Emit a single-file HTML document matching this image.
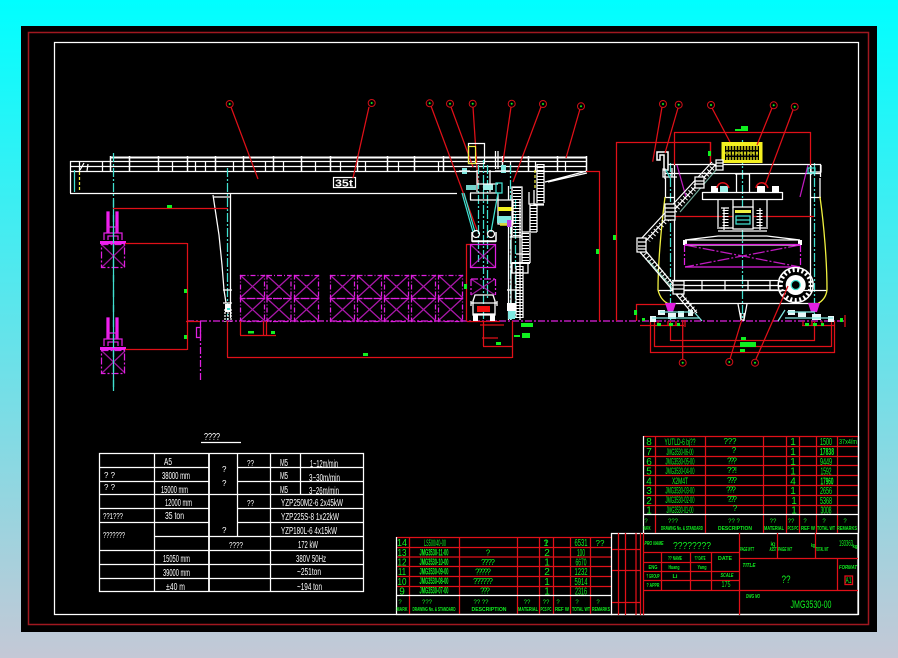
<!DOCTYPE html>
<html><head><meta charset="utf-8"><style>
html,body{margin:0;padding:0;width:898px;height:658px;overflow:hidden;background:linear-gradient(180deg,#00ffff 0%,#c4c8d6 100%)}
svg{position:absolute;left:0;top:0;stroke-width:1.25}
.w{stroke:#fff;fill:none}.r{stroke:#e01018;fill:none}.c{stroke:#40e0d0;fill:none;stroke-dasharray:9 2 2 2}.m{stroke:#e020e0;fill:none}.md{stroke:#e020e0;fill:none;stroke-dasharray:7 2 2 2}.y{stroke:#f0f040;fill:none}
text{font-family:"Liberation Sans",sans-serif;stroke:none}
.tw{fill:#fff;font-size:10px}.tg{fill:#10f020;font-size:10px;text-anchor:middle}.ts{fill:#10f020;font-size:5px;font-weight:bold;text-anchor:middle}.tb{fill:#10f020;font-size:6px;text-anchor:middle}
</style></head><body>
<svg width="898" height="658" viewBox="0 0 898 658">
<defs>
<g id="cont"><rect x="0.5" y="0.5" width="24" height="23" class="m" stroke-dasharray="5 2 1 2"/><path d="M0 0L25 23M25 0L0 23" class="m" opacity=".75"/></g>
<g id="stack"><use href="#cont" y="275"/><use href="#cont" y="298"/></g>
<g id="spr"><path d="M107 212h2v20h-2zM116 212h2v20h-2z" fill="#f020f0" stroke="#f020f0"/><path d="M108 233v-6h9v6M104 240v-7h18v7M108 240v-4h10v4" class="m"/><rect x="100" y="241" width="26" height="3" fill="#f020f0"/><rect x="101.500" y="244.500" width="23" height="23" class="md"/><path d="M102 245L125 267M125 245L102 267" class="m" opacity=".7"/></g>
<g id="ldr"><circle r="3.500" stroke="#d01018" fill="none" stroke-width="1"/><circle r="1" fill="#10f020"/></g>
</defs>
<rect x="21" y="26" width="856" height="606" fill="#000"/>
<rect x="28.500" y="32.500" width="840" height="592" fill="none" stroke="#a01820" stroke-width="1.500"/>
<rect x="54.500" y="42.500" width="804" height="572" fill="none" stroke="#fff"/>

<!-- girder -->
<g>
<path d="M110 157.500H587" class="w" stroke-width="2"/>
<path d="M70 161.500H586M70 166.500H586M70 171.500H586" class="w"/>
<path d="M70.500 161V193M70 193.500H457M79.500 161v10" class="w"/>
<path d="M110.500 156v16M129.500 156v16M158.500 156v16M187.500 156v16M215.500 156v16M243.500 156v16M273.500 156v16M301.500 156v16M330.500 156v16M357.500 156v16M387.500 156v16M414.500 156v16M443.500 156v16M502.500 156v16M528.500 156v16M557.500 156v16M586.500 156v16" class="w" stroke-width="1.500"/>
<path d="M102.500 162v9M172.500 162v9M195.500 162v9M205.500 162v9M233.500 162v9M265.500 162v9M283.500 162v9M315.500 162v9M340.500 162v9M365.500 162v9M398.500 162v9M438.500 162v9M510.500 162v9M535.500 162v9M565.500 162v9" class="w"/>
<path d="M74.500 170v22" stroke="#40e0d0"/><path d="M79.500 172v20" stroke="#f0f040" stroke-dasharray="3 2"/>
<rect x="333.500" y="177.500" width="22" height="10" fill="#000" stroke="#fff" stroke-width="1.200"/>
</g>
<text x="335" y="186.500" class="tw" font-weight="bold" textLength="18" lengthAdjust="spacingAndGlyphs">35t</text>
<path d="M84 163l-4 7M88 164l-1 7" class="w"/>
<path d="M587 171L545 182M587 173L548 182" class="w"/>

<!-- centre lines -->
<path d="M113.500 153V392M227.500 168V320M483.500 160V320M487.500 165V300M478.500 165V262M742.500 140V320M670.500 163V320M814.500 163V320M510.500 165V320M515.500 200V320" class="c"/>
<!-- left spreaders -->
<use href="#spr"/><use href="#spr" y="106"/>
<path d="M113.500 200V390" class="c"/>

<!-- left leg -->
<path d="M213 195L216 215L219 235L222 265L224 290L226 303" class="w"/><path d="M230.500 194V318" class="w"/><path d="M214 197H230M223 290H232M223 303H232" class="w"/>
<rect x="225" y="304" width="6" height="8" fill="#fff"/><path d="M225 309v13M228 312v10M231 309v13" class="w" stroke-dasharray="2 1"/><rect x="227" y="308" width="3" height="2" fill="#40e0d0"/>

<!-- containers -->
<use href="#stack" x="240"/><use href="#stack" x="266.500"/><use href="#stack" x="294"/>
<use href="#stack" x="330"/><use href="#stack" x="357"/><use href="#stack" x="384"/><use href="#stack" x="411"/><use href="#stack" x="438"/>
<path d="M187 321H845" class="md"/>
<path d="M200.500 321V382" class="md"/><rect x="196.500" y="327.500" width="4" height="10" class="m"/>

<!-- dims left -->
<g>
<path d="M113 208.500H228M125 243.500H187M125 349.500H187M187.500 243V350M186 321.500H200M227.500 321V357M227 357.500H512M512.500 321V358M483.500 321V346M483 346.500H512M240.500 321V335M240 335.500H276M263.500 321v14M266.500 321v14M466.500 244V321M466 244.500H472M599.500 171V321M586 171.500H600M616.500 142V321M616 142.500H711M710.500 142v22M467 321.500H500" class="r"/>
<path d="M480 325h24M482 338h16" class="r"/>
</g>
<g fill="#10f020"><rect x="167" y="205" width="5" height="3"/><rect x="184" y="289" width="3" height="4"/><rect x="184" y="335" width="3" height="4"/><rect x="248" y="331" width="6" height="2.500"/><rect x="271" y="331" width="4" height="3"/><rect x="464" y="284" width="3" height="5"/><rect x="596" y="249" width="3" height="5"/><rect x="613" y="235" width="3" height="5"/><rect x="496" y="342" width="5" height="3"/><rect x="363" y="353" width="5" height="3"/><rect x="521" y="323" width="12" height="4"/><rect x="522" y="333" width="8" height="5"/><rect x="514" y="335" width="6" height="2"/></g>

<!-- leaders left -->
<path d="M231 107L258 179M369 107L353 178M431 106L477 230M451 107L473 167M473 107L478 183M511 107L503 162M541 107L513 182M580 109L566 158" class="r"/>
<use href="#ldr" x="229.700" y="104"/><use href="#ldr" x="371.700" y="103"/><use href="#ldr" x="429.700" y="103.300"/><use href="#ldr" x="450" y="103.700"/><use href="#ldr" x="472.700" y="103.700"/><use href="#ldr" x="511.700" y="103.700"/><use href="#ldr" x="543" y="104"/><use href="#ldr" x="581" y="106.300"/>

<!-- trolley -->
<rect x="468.500" y="143.500" width="16" height="20" class="w"/><rect x="468.500" y="146.500" width="7" height="17" class="y" stroke-width="1.200"/>
<path d="M495.500 151v18M498 151v18" class="w"/>
<rect x="462" y="168" width="5" height="6" fill="#7fe8e0"/><rect x="501" y="165" width="5" height="8" fill="#7fe8e0"/><path d="M459 171H470M495 171H510" class="w"/>
<path d="M477 170v22M490 170v22M470 193h28M470 200h28M470.500 193v7M498 193v7" class="w"/>
<rect x="466" y="185" width="10" height="5" fill="#7fe8e0" opacity=".9"/><rect x="483" y="184" width="10" height="6" fill="#9ff0e8"/><path d="M477 184H498" class="w"/>
<rect x="496" y="183" width="6" height="10" stroke="#40e0d0" fill="none"/>
<path d="M462 193L473 232M498 193L491 232" stroke="#40e0d0" fill="none"/><path d="M464 193L475 232" stroke="#40e0d0" fill="none"/>
<circle cx="476" cy="234" r="3.500" class="w"/><circle cx="491" cy="234" r="3.500" class="w"/>
<path d="M472 232v9h24v-9M472 241.500h24" class="w" stroke-width="1.500"/>
<rect x="470.500" y="244.500" width="25" height="23" class="m"/><path d="M471 245L495 267M495 245L471 267" class="m" opacity=".7"/>
<path d="M471 279h25M471 279v16M495.500 279v16" class="md"/><path d="M471 279L495 295M495 279L471 295" class="m" opacity=".7"/>
<!-- truck -->
<path d="M473 315v-14l2-6h18l2 6v14zM471 303h26M471 301v5M497 301v5" class="w" stroke-width="1.300"/><rect x="477" y="306" width="13" height="6" fill="#f00c0c"/><rect x="473" y="315" width="5" height="6" fill="#fff"/><rect x="490" y="315" width="5" height="6" fill="#fff"/><path d="M473 314h22" class="w"/>

<!-- right leg and stairs -->
<path d="M508.500 186V320M511 200V320M520 200V320" class="w"/>
<rect x="498" y="200" width="15" height="24" fill="#000" stroke="#fff"/>
<rect x="498" y="207" width="15" height="4" fill="#f0f020"/><rect x="500" y="223" width="13" height="3" fill="#f0f020" opacity=".7"/>
<path d="M497 216h14v7h-14z" fill="#7fe8e0"/><rect x="507" y="220" width="5" height="7" fill="#c040e0"/>
<rect x="512" y="187" width="10" height="50" class="w"/><path d="M517 187V236" stroke="#fff" stroke-width="8" stroke-dasharray="1 2" fill="none"/>
<path d="M537 164V203M544 164V203" class="w"/><path d="M540.500 164V203" stroke="#fff" stroke-width="7" stroke-dasharray="1 2" fill="none"/>
<path d="M534 190V205H544M529 192V204h15" class="w"/>
<path d="M530 204V232M537 204V232" class="w"/><path d="M533.500 205V232" stroke="#fff" stroke-width="7" stroke-dasharray="1 2" fill="none"/>
<path d="M522 232h15M522 233V263M530 233V263" class="w"/><path d="M525.500 233V263" stroke="#fff" stroke-width="7" stroke-dasharray="1 2" fill="none"/>
<path d="M512 263h16v10h-16zM516 254h14" class="w"/><rect x="512" y="262" width="18" height="2" fill="#fff"/>
<path d="M516 266V318M523 266V318" class="w"/><path d="M519.500 266V318" stroke="#fff" stroke-width="7" stroke-dasharray="1 2" fill="none"/>
<path d="M535 170V190" stroke="#f0f040" stroke-dasharray="3 2"/>
<rect x="507" y="303" width="9" height="8" fill="#fff"/><rect x="508" y="311" width="7" height="8" fill="#7fe8e0"/><path d="M507 290h12" class="w"/>

<!-- right view -->
<rect x="721.500" y="142" width="41" height="21" fill="#f4f020"/>
<rect x="725" y="146" width="34" height="14" fill="#000"/>
<path d="M727 146v14M730 146v14M733 146v14M736 146v14M739 146v14M742 146v14M745 146v14M748 146v14M751 146v14M754 146v14M757 146v14" stroke="#f4f020" stroke-dasharray="4 1.500" stroke-width="1.300"/>
<path d="M724 153H760" stroke="#f4f020" stroke-dasharray="2 2"/>
<g>
<path d="M665 164.500H821M665 173.500H821M665 164v15M820.500 164v13M665 197.500H675M810 197.500H821M665.500 178v19M820 178v19" class="w"/>
<path d="M674.500 165V290M810.500 165V290" class="w"/>
<path d="M658 290.500H827M668 303.500H817M672 280.500H778M672 285.500H778M672 290H778" class="w"/>
<path d="M680 281v9M702 281v9M725 281v9M748 281v9M770 281v9" class="w"/>
<path d="M702.500 192.500H782.500M702.500 199.500H782.500M702.500 192v8M782.500 192v8" class="w"/>
<path d="M736.500 174v19M749.500 174v19M735 174h15" class="w"/>
<path d="M671 216.500H814M674 132.500H811M674.500 132v33M810.500 132v33M710.500 142v22" class="r"/>
<path d="M670.500 321v20M814.500 321v20M670 340.500H815M654.500 321v26M831.500 321v26M654 346.500H831M650.500 321v32M834.500 321v32M650 352.500H835M636.500 304v17M636 304.500H668M640 325.500H684M802 325.500H835M658 321v5M668 321v5M676 321v5M803 321v5M812 321v5M822 321v5M685 320v7M845 315v12" class="r"/>
</g>
<path d="M677 165L686 197M808 165L800 197" class="m" opacity=".85"/>
<path d="M665 197C661 230 658 262 658 290C660 298 664 302 669 304M820 197C824 225 827 262 827 290C826 298 821 302 817 304" class="y" stroke-width="1.300"/>
<!-- trolley wheels -->
<g fill="#fff"><rect x="711" y="186" width="7" height="6"/><rect x="772" y="186" width="7" height="6"/><rect x="720" y="186" width="8" height="6" fill="#9ff0e8"/><rect x="757" y="186" width="8" height="6" fill="#fff"/></g>
<path d="M717 188c1-7 10-7 12 0M756 188c1-7 10-7 12 0" class="r" stroke-width="1.500"/>
<!-- hoist -->
<path d="M718 199v30M767 199v30M724 208v22M733 200v8h20v-8M760 208v22M719 228H766M718 231H767" class="w"/>
<path d="M721 208h8M721 228h8" class="w"/><path d="M725.500 210v18" stroke="#fff" stroke-width="6" stroke-dasharray="1 2" fill="none"/><path d="M759.500 210v18" stroke="#fff" stroke-width="6" stroke-dasharray="1 2" fill="none"/>
<rect x="733" y="207" width="20" height="22" fill="#000" stroke="#fff"/>
<rect x="735" y="210" width="16" height="3" fill="#f0f040"/>
<path d="M736 216h14v8h-14zM736 220h14" stroke="#40e0d0" fill="none"/>
<!-- spreader -->
<path d="M685 240L718 236H767L800 240H685ZM685 245H800" class="w" stroke-width="1.300"/>
<rect x="683" y="240" width="4" height="5" fill="#fff"/><rect x="798" y="240" width="4" height="5" fill="#fff"/>
<path d="M684.500 245V267M800.500 245V267" class="md"/><path d="M685 244.500H800M685 267H800" class="m"/>
<path d="M685 245L800 267M800 245L685 267" class="m" stroke-dasharray="12 2 2 2" opacity=".85"/>
<!-- reel -->
<circle cx="795.700" cy="285" r="17.500" class="w" stroke-width="1.500"/><circle cx="795.700" cy="285" r="15" stroke="#fff" fill="none" stroke-width="4" stroke-dasharray="2 2.500"/><circle cx="795.700" cy="285" r="10" fill="#fff"/><circle cx="795.700" cy="285" r="4.500" fill="#000" stroke="#40e0d0"/>
<!-- stairs -->
<path d="M718 162L644 243M712 162L640 240M645 250L697 313M640 252L692 313" class="w"/>
<path d="M715 165L648 240M642 251L695 312" stroke="#fff" stroke-width="6" stroke-dasharray="1 3" fill="none"/>
<path d="M716 170L680 212M648 260L676 292" stroke="#9ff0d8" fill="none" opacity=".7"/>
<rect x="637" y="238" width="9" height="14" fill="#000" stroke="#fff"/><path d="M638 242h8M638 246h8M638 249h8" class="w"/>
<rect x="665" y="204" width="10" height="16" fill="#000" stroke="#fff"/><path d="M665 208h10M665 212h10M665 216h10" class="w"/>
<rect x="695" y="177" width="9" height="11" fill="#000" stroke="#fff"/><path d="M695 181h9M695 184h9" class="w"/>
<rect x="716" y="160" width="7" height="10" fill="#000" stroke="#fff"/><path d="M716 163h7M716 166h7" class="w"/>
<rect x="673" y="281" width="11" height="13" fill="#000" stroke="#fff"/><path d="M673 285h11M673 289h11" class="w"/>
<!-- hook -->
<path d="M657 160V152H668V170H664V155H660V160Z" fill="#000" stroke="#fff" stroke-width="1.500"/>
<path d="M663 170v-1h2v8h-2zM672 168v9M665 177h12" class="w"/><path d="M666 170L670 178" stroke="#40e0d0"/>
<path d="M811 172h10v-7M811 166v9" class="w"/><rect x="808" y="168" width="7" height="5" stroke="#40e0d0" fill="none"/>
<!-- legs base -->
<path d="M665 303L676 303L673 312H668ZM808 303H820L817 312H811Z" fill="#e020e0"/>
<path d="M738 304L741 320H744L747 304M741 313v8M744 313v8" class="w"/>
<g fill="#e8f8f8"><rect x="650" y="316" width="6" height="6"/><rect x="658" y="310" width="7" height="5"/><rect x="668" y="313" width="8" height="6"/><rect x="678" y="311" width="6" height="6"/><rect x="688" y="310" width="5" height="6"/><rect x="828" y="316" width="6" height="6"/><rect x="788" y="310" width="7" height="5"/><rect x="798" y="312" width="8" height="5"/><rect x="812" y="314" width="9" height="6"/></g>
<path d="M652 318H700M660 312H690M695 313L702 321M785 318H833M787 312H815M785 310L778 321" stroke="#7fe8e0" fill="none"/>
<!-- leaders right -->
<path d="M662 107L652.700 161.700M678 108L665 153M712 108L730 142M772 108L757 145M793 110L765 185M682.700 359V320M730 359L741.700 320M756 359L788 286" class="r"/>
<use href="#ldr" x="663" y="104"/><use href="#ldr" x="678.700" y="104.700"/><use href="#ldr" x="711" y="105"/><use href="#ldr" x="773.700" y="105.300"/><use href="#ldr" x="794.700" y="106.700"/><use href="#ldr" x="682.700" y="362.700"/><use href="#ldr" x="729.300" y="362"/><use href="#ldr" x="755" y="362.700"/>
<g fill="#10f020"><rect x="735" y="129" width="8" height="2"/><rect x="741" y="126" width="7" height="5"/><rect x="708" y="151" width="3" height="5"/><rect x="634" y="310" width="3" height="5"/><rect x="642" y="318" width="3" height="3"/><rect x="657" y="323" width="4" height="3"/><rect x="669" y="323" width="4" height="3"/><rect x="677" y="323" width="3" height="3"/><rect x="805" y="323" width="4" height="3"/><rect x="813" y="323" width="4" height="3"/><rect x="821" y="323" width="3" height="3"/><rect x="840" y="318" width="3" height="4"/><rect x="741" y="337" width="5" height="3"/><rect x="740" y="342" width="16" height="5"/><rect x="740" y="349" width="5" height="3"/></g>

<!-- spec table -->
<text x="204" y="440" class="tw" font-size="9" textLength="16" lengthAdjust="spacingAndGlyphs">????</text>
<path d="M201 442.500H241" stroke="#fff" stroke-width="1.300"/>
<g class="w">
<path d="M99.500 453.500H363.500V591.500H99.500ZM154.500 453.500V591.500M237.500 453.500V536M270.500 453.500V591.500M300.500 453.500V494"/>
<path d="M99 467.500H209M237 467.500H363M99 481.500H209M237 481.500H363M99 494.500H363M99 508.500H209M237 508.500H363M99 522.500H209M237 522.500H363M154 536.500H363M99 550.500H363M99 564.500H363M99 578.500H363"/>
<path d="M209 453V592" stroke-width="1.800"/>
</g>
<g class="tw">
<text x="104" y="478" textLength="11" lengthAdjust="spacingAndGlyphs" font-size="8">? ?</text>
<text x="104" y="490" textLength="11" lengthAdjust="spacingAndGlyphs" font-size="8">? ?</text>
<text x="103" y="519" textLength="20" lengthAdjust="spacingAndGlyphs" font-size="8">??1???</text>
<text x="103" y="538" textLength="22" lengthAdjust="spacingAndGlyphs" font-size="8">???????</text>
<text x="164" y="465" textLength="8" lengthAdjust="spacingAndGlyphs">A5</text>
<text x="162" y="479" textLength="28" lengthAdjust="spacingAndGlyphs">38000 mm</text>
<text x="161" y="493" textLength="27" lengthAdjust="spacingAndGlyphs">15000 mm</text>
<text x="165" y="506" textLength="27" lengthAdjust="spacingAndGlyphs">12000 mm</text>
<text x="165" y="519" textLength="19" lengthAdjust="spacingAndGlyphs">35 ton</text>
<text x="163" y="562" textLength="27" lengthAdjust="spacingAndGlyphs">15050 mm</text>
<text x="163" y="576" textLength="27" lengthAdjust="spacingAndGlyphs">39000 mm</text>
<text x="166" y="590" textLength="19" lengthAdjust="spacingAndGlyphs">±40 m</text>
<text x="222" y="472" font-size="8">?</text><text x="222" y="486" font-size="8">?</text><text x="222" y="533" font-size="8">?</text>
<text x="247" y="466" font-size="8" textLength="7" lengthAdjust="spacingAndGlyphs">??</text><text x="247" y="506" font-size="8" textLength="7" lengthAdjust="spacingAndGlyphs">??</text>
<text x="280" y="466" textLength="8" lengthAdjust="spacingAndGlyphs">M5</text><text x="280" y="479" textLength="8" lengthAdjust="spacingAndGlyphs">M5</text><text x="280" y="493" textLength="8" lengthAdjust="spacingAndGlyphs">M5</text>
<text x="310" y="467" textLength="28" lengthAdjust="spacingAndGlyphs">1~12m/min</text>
<text x="309" y="481" textLength="31" lengthAdjust="spacingAndGlyphs">3~30m/min</text>
<text x="309" y="494" textLength="30" lengthAdjust="spacingAndGlyphs">3~26m/min</text>
<text x="281" y="506" textLength="62" lengthAdjust="spacingAndGlyphs">YZP250M2-6 2x45kW</text>
<text x="281" y="520" textLength="58" lengthAdjust="spacingAndGlyphs">YZP225S-8 1x22kW</text>
<text x="281" y="534" textLength="56" lengthAdjust="spacingAndGlyphs">YZP180L-6 4x15kW</text>
<text x="229" y="548" font-size="8" textLength="14" lengthAdjust="spacingAndGlyphs">????</text>
<text x="298" y="548" textLength="20" lengthAdjust="spacingAndGlyphs">172 kW</text>
<text x="296" y="562" textLength="30" lengthAdjust="spacingAndGlyphs">380V 50Hz</text>
<text x="297" y="575" textLength="24" lengthAdjust="spacingAndGlyphs">~251ton</text>
<text x="297" y="590" textLength="25" lengthAdjust="spacingAndGlyphs">~194 ton</text>
</g>

<!-- bottom list -->
<g>
<path d="M396 537.500H612M396 547.500H612M396 557H612M396 566.500H612M396 576.500H612M396 586.500H612" class="r"/>
<path d="M409.500 537V615M459.500 537V615M517.500 537V615M539.500 537V615M553.500 537V615M570.500 537V615M590.500 537V615" class="r"/>
<path d="M396.500 537V615M396 595.500H612M396 614.500H612" class="w"/>
<path d="M611.500 533V615M611 533.500H858M858 533V615M611 614.500H858" class="w"/>
<path d="M618.500 533V615M625.500 533V615M640.500 533V615M636 533V615M612 549.500H640M612 570.500H640M612 602.500H640" class="r"/>
<!-- right list -->
<path d="M643 436.500H858M643 446.500H858M643 456.500H858M643 465.500H858M643 475.500H858M643 485.500H858M643 495.500H858M643 505.500H858" class="r"/>
<path d="M655.500 436V533M705.500 436V533M763.500 436V533M786.500 436V533M799.500 436V533M816.500 436V533M837.500 436V533" class="r"/>
<path d="M643.500 436V533M643 514.500H858M858.500 436V533" class="w"/>
<!-- title -->
<path d="M643.500 533V615M739.500 533V615M643 552.500H739M643 562.500H711M643 571.500H739M643 580.500H739M643 590.500H858M661.500 552V590M690.500 552V590M711.500 552V590M739 558.500H858M777.500 533V558M815.500 533V558M837.500 558V590" class="r"/>
</g>
<rect x="845" y="576" width="7.500" height="8.500" fill="none" stroke="#e01018" stroke-width="1.300"/>

<!-- green text bottom list -->
<g class="tg">
<text x="402" y="546" textLength="10" lengthAdjust="spacingAndGlyphs">14</text><text x="402" y="556" textLength="9" lengthAdjust="spacingAndGlyphs">13</text><text x="402" y="565.500" textLength="9" lengthAdjust="spacingAndGlyphs">12</text><text x="402" y="575" textLength="8" lengthAdjust="spacingAndGlyphs">11</text><text x="402" y="585" textLength="9" lengthAdjust="spacingAndGlyphs">10</text><text x="402" y="594.500" textLength="4">9</text>
<text x="435" y="546" textLength="22" lengthAdjust="spacingAndGlyphs" font-size="9">LS500/40-00</text>
<text x="434" y="555.500" textLength="29" lengthAdjust="spacingAndGlyphs" font-size="9" font-weight="bold">JMG3530-11-00</text>
<text x="434" y="565" textLength="29" lengthAdjust="spacingAndGlyphs" font-size="9" font-weight="bold">JMG3530-10-00</text>
<text x="434" y="574.500" textLength="29" lengthAdjust="spacingAndGlyphs" font-size="9" font-weight="bold">JMG3530-09-00</text>
<text x="434" y="584" textLength="29" lengthAdjust="spacingAndGlyphs" font-size="9" font-weight="bold">JMG3530-08-00</text>
<text x="434" y="593.500" textLength="29" lengthAdjust="spacingAndGlyphs" font-size="9" font-weight="bold">JMG3530-07-00</text>
<text x="488" y="555.500" font-size="8">?</text><text x="488" y="565" font-size="8" textLength="14">????</text><text x="483" y="574.500" font-size="8" textLength="16">?????</text><text x="483" y="584" font-size="8" textLength="20">??????</text><text x="485" y="593.500" font-size="8" textLength="10">???</text>
<text x="546" y="546" font-size="9" textLength="5">1?</text><text x="547" y="556" textLength="4">2</text><text x="547" y="565.500" textLength="3">1</text><text x="547" y="575" textLength="4">2</text><text x="547" y="585" textLength="3">1</text><text x="547" y="594.500" textLength="3">1</text>
<text x="581" y="546" textLength="13" lengthAdjust="spacingAndGlyphs">6531</text><text x="581" y="556" textLength="8" lengthAdjust="spacingAndGlyphs">100</text><text x="581" y="565.500" textLength="11" lengthAdjust="spacingAndGlyphs">6670</text><text x="581" y="575" textLength="13" lengthAdjust="spacingAndGlyphs">1232</text><text x="581" y="585" textLength="13" lengthAdjust="spacingAndGlyphs">5914</text><text x="581" y="594.500" textLength="12" lengthAdjust="spacingAndGlyphs">2316</text>
<text x="600" y="546" font-size="8">??</text>
</g>
<g class="tb">
<text x="400" y="604">?</text><text x="427" y="604">???</text><text x="481" y="604">??  ??</text><text x="527" y="604">??</text><text x="546" y="604">??</text><text x="558" y="604">?</text><text x="577" y="604">?</text><text x="598" y="604">?</text>
</g>
<g class="ts">
<text x="402" y="611" textLength="11" lengthAdjust="spacingAndGlyphs">MARK</text><text x="434" y="611" textLength="43" lengthAdjust="spacingAndGlyphs">DRAWING No. &amp; STANDARD</text><text x="489" y="611" textLength="35" lengthAdjust="spacingAndGlyphs">DESCRIPTION</text><text x="528" y="611" textLength="20" lengthAdjust="spacingAndGlyphs">MATERIAL</text><text x="546" y="611" textLength="11" lengthAdjust="spacingAndGlyphs">PCS PC</text><text x="562" y="611" textLength="14" lengthAdjust="spacingAndGlyphs">REF W</text><text x="581" y="611" textLength="18" lengthAdjust="spacingAndGlyphs">TOTAL WT</text><text x="601" y="611" textLength="18" lengthAdjust="spacingAndGlyphs">REMARKS</text>
</g>
<!-- right list text -->
<g class="tg">
<text x="649" y="445" textLength="4">8</text><text x="649" y="455" textLength="4">7</text><text x="649" y="465" textLength="4">6</text><text x="649" y="474.500" textLength="4">5</text><text x="649" y="484.500" textLength="4">4</text><text x="649" y="494" textLength="4">3</text><text x="649" y="504" textLength="4">2</text><text x="649" y="513.500" textLength="3">1</text>
<text x="680" y="445" font-size="9" textLength="31" lengthAdjust="spacingAndGlyphs">YUTLD-6 bj??</text>
<text x="680" y="455" font-size="9" textLength="27" lengthAdjust="spacingAndGlyphs">JMG3530-06-00</text>
<text x="680" y="464.500" font-size="9" textLength="29" lengthAdjust="spacingAndGlyphs">JMG3530-05-00</text>
<text x="680" y="474" font-size="9" textLength="29" lengthAdjust="spacingAndGlyphs">JMG3530-04-00</text>
<text x="680" y="484" font-size="9" textLength="16" lengthAdjust="spacingAndGlyphs">X2M4T</text>
<text x="680" y="493.500" font-size="9" textLength="29" lengthAdjust="spacingAndGlyphs">JMG3530-03-00</text>
<text x="680" y="503" font-size="9" textLength="29" lengthAdjust="spacingAndGlyphs">JMG3530-02-00</text>
<text x="680" y="513" font-size="9" textLength="27" lengthAdjust="spacingAndGlyphs">JMG3530-01-00</text>
<text x="730" y="444" font-size="8" textLength="13">???</text><text x="734" y="453" font-size="8">?</text><text x="732" y="463.500" font-size="8" textLength="10">???</text><text x="732" y="473" font-size="8" textLength="10">??!</text><text x="732" y="483" font-size="8" textLength="10">???</text><text x="731" y="492.500" font-size="8" textLength="10">???</text><text x="732" y="502" font-size="8" textLength="10">?.??</text><text x="735" y="511" font-size="8">?</text>
<text x="793" y="445" textLength="3">1</text><text x="793" y="455" textLength="3">1</text><text x="793" y="465" textLength="3">1</text><text x="793" y="474.500" textLength="3">1</text><text x="793" y="484.500" textLength="3">4</text><text x="793" y="494" textLength="3">1</text><text x="794" y="504" textLength="3">1</text><text x="794" y="513.500" textLength="3">1</text>
<text x="826" y="445" textLength="12" lengthAdjust="spacingAndGlyphs">1500</text><text x="827" y="455" textLength="14" lengthAdjust="spacingAndGlyphs" font-weight="bold">17838</text><text x="826" y="465" textLength="12" lengthAdjust="spacingAndGlyphs">9449</text><text x="826" y="474.500" textLength="11" lengthAdjust="spacingAndGlyphs">1592</text><text x="827" y="484.500" textLength="13" lengthAdjust="spacingAndGlyphs" font-weight="bold">17960</text><text x="826" y="494" textLength="12" lengthAdjust="spacingAndGlyphs">2656</text><text x="826" y="504" textLength="12" lengthAdjust="spacingAndGlyphs">5368</text><text x="826" y="513.500" textLength="11" lengthAdjust="spacingAndGlyphs">3008</text>
<text x="848" y="444" font-size="7" textLength="18" lengthAdjust="spacingAndGlyphs">37x4/m</text>
</g>
<g class="tb">
<text x="646" y="523">?</text><text x="673" y="523">???</text><text x="734" y="523">??  ?</text><text x="773" y="523">??</text><text x="791" y="523">??</text><text x="805" y="523">?</text><text x="824" y="523">?</text><text x="845" y="523">?</text>
</g>
<g class="ts">
<text x="647" y="530" textLength="7" lengthAdjust="spacingAndGlyphs">MARK</text><text x="682" y="530" textLength="42" lengthAdjust="spacingAndGlyphs">DRAWING No. &amp; STANDARD</text><text x="735" y="530" textLength="34" lengthAdjust="spacingAndGlyphs">DESCRIPTION</text><text x="774" y="530" textLength="20" lengthAdjust="spacingAndGlyphs">MATERIAL</text><text x="793" y="530" textLength="11" lengthAdjust="spacingAndGlyphs">PCS PC</text><text x="808" y="530" textLength="14" lengthAdjust="spacingAndGlyphs">REF W</text><text x="826" y="530" textLength="18" lengthAdjust="spacingAndGlyphs">TOTAL WT</text><text x="847" y="530" textLength="20" lengthAdjust="spacingAndGlyphs">REMARKS</text>
</g>
<!-- title block text -->
<g class="ts">
<text x="654" y="545" textLength="19" lengthAdjust="spacingAndGlyphs" font-style="italic">PRO NAME</text>
<text x="747" y="551" textLength="14" lengthAdjust="spacingAndGlyphs" font-style="italic">PAGE WTT</text>
<text x="773" y="551" textLength="7" lengthAdjust="spacingAndGlyphs" font-style="italic">ASST</text><text x="785" y="551" textLength="14" lengthAdjust="spacingAndGlyphs" font-style="italic">PAGE WT</text>
<text x="822" y="551" textLength="13" lengthAdjust="spacingAndGlyphs" font-style="italic">TOTAL WT</text><text x="813" y="547" textLength="4" lengthAdjust="spacingAndGlyphs">kg</text><text x="855" y="548" textLength="5" lengthAdjust="spacingAndGlyphs">kg</text>
<text x="749" y="567" textLength="13" lengthAdjust="spacingAndGlyphs" font-style="italic">TITLE</text>
<text x="848" y="569" textLength="18" lengthAdjust="spacingAndGlyphs" font-style="italic">FORMAT</text>
<text x="725" y="560" textLength="14" lengthAdjust="spacingAndGlyphs">DATE</text>
<text x="727" y="577" textLength="13" lengthAdjust="spacingAndGlyphs" font-style="italic">SCALE</text>
<text x="753" y="598" textLength="14" lengthAdjust="spacingAndGlyphs" font-style="italic">DWG NO</text>
<text x="675" y="560" textLength="14" lengthAdjust="spacingAndGlyphs">?? NAME</text><text x="700" y="560" textLength="11" lengthAdjust="spacingAndGlyphs">?? DATE</text>
<text x="653" y="569" textLength="9" lengthAdjust="spacingAndGlyphs">ENG</text><text x="674" y="569" textLength="11" lengthAdjust="spacingAndGlyphs">Huang</text><text x="702" y="569" textLength="9" lengthAdjust="spacingAndGlyphs">Yang</text>
<text x="653" y="578" textLength="13" lengthAdjust="spacingAndGlyphs">? GROUP</text><text x="653" y="587" textLength="13" lengthAdjust="spacingAndGlyphs">? APPR</text>
<text x="675" y="578" textLength="5" lengthAdjust="spacingAndGlyphs">Li</text>
</g>
<g class="tg">
<text x="692" y="549" textLength="38" lengthAdjust="spacingAndGlyphs" font-size="10">????????</text>
<text x="786" y="583" font-size="11" textLength="9" lengthAdjust="spacingAndGlyphs">??</text>
<text x="726" y="587" font-size="8" textLength="9" lengthAdjust="spacingAndGlyphs">175</text>
<text x="848.500" y="583" font-size="8" textLength="6" lengthAdjust="spacingAndGlyphs">A1</text>
<text x="811" y="608" font-size="11" textLength="41" lengthAdjust="spacingAndGlyphs">JMG3530-00</text>
<text x="846" y="546" font-size="8" textLength="14" lengthAdjust="spacingAndGlyphs">193363</text>
<text x="773" y="546" font-size="6" textLength="5">kg</text>
</g>
</svg>
</body></html>
